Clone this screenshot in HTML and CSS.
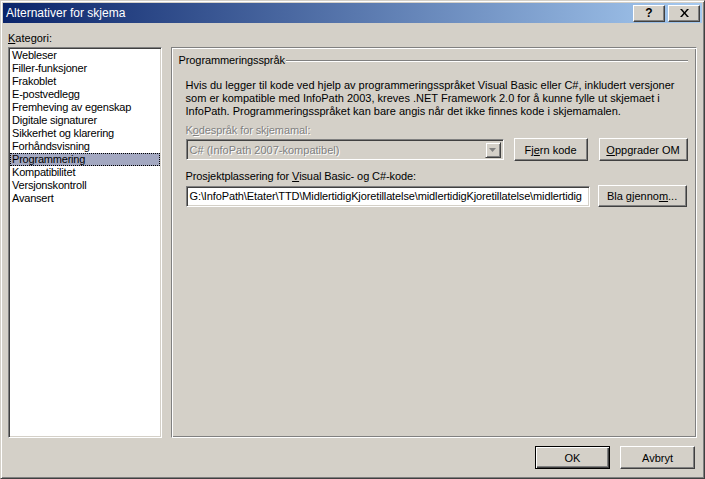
FILE: index.html
```html
<!DOCTYPE html>
<html lang="no">
<head>
<meta charset="utf-8">
<title>Alternativer for skjema</title>
<link rel="stylesheet" href="styles.css">
</head>
<body>
<div class="window">
  <div class="titlebar">
    <span class="title">Alternativer for skjema</span>
    <div class="caps">
      <span class="cap help">?</span>
      <span class="cap close"><svg width="9" height="8" viewBox="0 0 9 8"><path d="M0 0h2l2.5 3 2.5-3h2L5.5 4 9 8H7L4.5 5 2 8H0l3.5-4z" fill="#000"/></svg></span>
    </div>
  </div>
  <div class="body">
    <div class="label"><u>K</u>ategori:</div>
    <div class="main">
      <ul class="list">
        <li>Webleser</li>
        <li>Filler-funksjoner</li>
        <li>Frakoblet</li>
        <li>E-postvedlegg</li>
        <li>Fremheving av egenskap</li>
        <li>Digitale signaturer</li>
        <li>Sikkerhet og klarering</li>
        <li>Forhåndsvisning</li>
        <li class="selected">Programmering</li>
        <li>Kompatibilitet</li>
        <li>Versjonskontroll</li>
        <li>Avansert</li>
      </ul>
      <div class="panel">
        <div class="group-head"><span>Programmeringsspråk</span><span class="rule"></span></div>
        <div class="content">
          <p class="desc">Hvis du legger til kode ved hjelp av programmeringsspråket Visual Basic eller C#, inkludert versjoner<br>som er kompatible med InfoPath 2003, kreves .NET Framework 2.0 for å kunne fylle ut skjemaet i<br>InfoPath. Programmeringsspråket kan bare angis når det ikke finnes kode i skjemamalen.</p>
          <div class="field-label disabled">K<u>o</u>despråk for skjemamal:</div>
          <div class="row row-combo">
            <div class="combo"><span class="combo-text">C# (InfoPath 2007-kompatibel)</span><span class="drop"><svg width="7" height="4" viewBox="0 0 7 4"><path d="M0 0h7L3.5 4z" fill="#808080"/></svg></span></div>
            <button class="btn btn-fjern">Fj<u>e</u>rn kode</button>
            <button class="btn btn-wide"><u>O</u>ppgrader OM</button>
          </div>
          <div class="field-label label-path">Prosjektplassering for <u>V</u>isual Basic- og C#-kode:</div>
          <div class="row row-path">
            <div class="input">G:\InfoPath\Etater\TTD\MidlertidigKjoretillatelse\midlertidigKjoretillatelse\midlertidig</div>
            <button class="btn btn-wide btn-browse">Bla gjenno<u>m</u>...</button>
          </div>
        </div>
      </div>
    </div>
    <div class="footer">
      <button class="btn btn-ok">OK</button>
      <button class="btn btn-foot">Avbryt</button>
    </div>
  </div>
</div>
</body>
</html>
```
FILE: styles.css
```css
* { box-sizing: border-box; }
html, body { margin: 0; padding: 0; }
body {
  width: 705px;
  height: 479px;
  overflow: hidden;
  font-family: "Liberation Sans", Arial, sans-serif;
  font-size: 11px;
  color: #000;
  background: #d4d0c8;
}
u { text-decoration: underline; text-underline-offset: 1px; }

.window {
  width: 705px;
  height: 479px;
  background: #d4d0c8;
  border: 1px solid;
  border-color: #d4d0c8 #404040 #404040 #d4d0c8;
  box-shadow: inset 1px 1px #fff, inset -1px -1px #808080;
  padding: 2px;
  display: flex;
  flex-direction: column;
}

.titlebar {
  height: 20px;
  flex: none;
  background: linear-gradient(to right, #0a246a, #a6caf0);
  display: flex;
  align-items: center;
  justify-content: space-between;
  padding: 0 2px 0 3px;
}
.title {
  color: #fff;
  font-size: 12px;
}
.caps { display: flex; gap: 3px; }
.cap {
  width: 32px;
  height: 17px;
  background: #d4d0c8;
  border: 1px solid;
  border-color: #fff #404040 #404040 #fff;
  box-shadow: inset -1px -1px #808080;
  display: flex;
  align-items: center;
  justify-content: center;
  font-weight: bold;
  font-size: 12px;
  line-height: 1;
}

.body {
  flex: 1;
  display: flex;
  flex-direction: column;
  padding: 9px 5px 0 5px;
}
.label {
  line-height: 13px;
  height: 13px;
  margin-bottom: 2px;
}
.main {
  display: flex;
  gap: 9px;
  height: 391px;
}

.list {
  list-style: none;
  margin: 0;
  width: 154px;
  height: 391px;
  background: #fff;
  border: 1px solid;
  border-color: #808080 #fff #fff #808080;
  box-shadow: inset 1px 1px #404040, inset -1px -1px #d4d0c8;
  padding: 1px;
}
.list li {
  height: 13px;
  line-height: 13px;
  padding-left: 2px;
  letter-spacing: -0.2px;
  white-space: nowrap;
}
.list li.selected {
  background: #a3a8c1;
  outline: 1px dotted #000;
  outline-offset: -1px;
}

.panel {
  width: 528px;
  height: 391px;
  border: 1px solid;
  border-color: #808080 #fff #fff #808080;
  box-shadow: inset 1px 1px #fff, inset -1px -1px #808080;
  padding: 6px 8px 0 7px;
}
.group-head {
  display: flex;
  align-items: center;
  height: 13px;
  line-height: 13px;
  letter-spacing: -0.1px;
}
.group-head .rule {
  flex: 1;
  height: 2px;
  border-top: 1px solid #808080;
  border-bottom: 1px solid #fff;
  margin-left: 1px;
  margin-top: 1px;
}
.content {
  padding-left: 7px;
}
.desc {
  margin: 12px 0 0 0;
  line-height: 13px;
  white-space: nowrap;
}
.field-label {
  line-height: 13px;
  height: 13px;
  margin-top: 6px;
  letter-spacing: -0.1px;
}
.field-label.disabled {
  color: #808080;
  text-shadow: 1px 1px #fff;
}
.label-path { margin-top: 9px; }

.row {
  display: flex;
  align-items: center;
}
.row-combo { margin-top: 1px; height: 23px; }
.row-path { margin-top: 2px; height: 22px; }

.combo {
  width: 318px;
  height: 21px;
  margin-right: 10px;
  border: 1px solid;
  border-color: #808080 #fff #fff #808080;
  box-shadow: inset 1px 1px #404040, inset -1px -1px #d4d0c8;
  display: flex;
  align-items: center;
  justify-content: space-between;
  padding: 2px 2px 2px 3px;
  color: #808080;
  text-shadow: 1px 1px #fff;
}
.drop {
  width: 16px;
  height: 16px;
  border: 1px solid;
  border-color: #d4d0c8 #404040 #404040 #d4d0c8;
  box-shadow: inset 1px 1px #fff, inset -1px -1px #808080;
  display: flex;
  align-items: center;
  justify-content: center;
}

.btn {
  font-family: inherit;
  font-size: 11px;
  color: #000;
  background: #d4d0c8;
  border: 1px solid;
  border-color: #fff #404040 #404040 #fff;
  box-shadow: inset -1px -1px #808080, inset 1px 1px #d4d0c8;
  padding: 0;
  height: 23px;
  border-radius: 0;
}
.btn-fjern { width: 74px; margin-right: 11px; }
.btn-wide { width: 89px; }
.btn-browse { height: 22px; margin-left: 8px; }

.input {
  width: 404px;
  height: 21px;
  background: #fff;
  border: 1px solid;
  border-color: #808080 #fff #fff #808080;
  box-shadow: inset 1px 1px #404040, inset -1px -1px #d4d0c8;
  padding: 0 1px 0 3px;
  line-height: 19px;
  white-space: nowrap;
  overflow: hidden;
  letter-spacing: -0.12px;
}

.footer {
  display: flex;
  justify-content: flex-end;
  gap: 10px;
  margin-top: 8px;
  padding-right: 2px;
}
.btn-ok, .btn-foot { width: 75px; }
.btn-ok {
  border: 1px solid #000;
  box-shadow: inset 1px 1px #fff, inset -1px -1px #404040, inset -2px -2px #808080;
}
```
